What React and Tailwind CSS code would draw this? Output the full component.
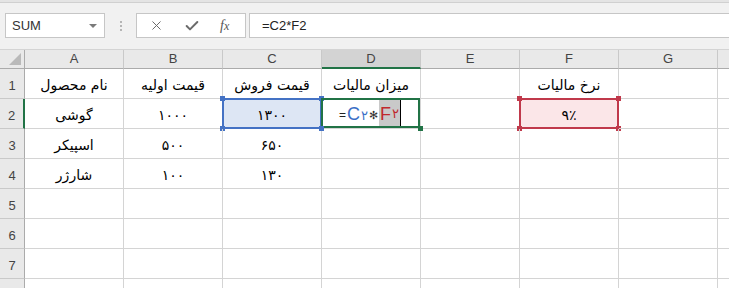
import { X, Check } from 'lucide-react';

const cols = ['A', 'B', 'C', 'D', 'E', 'F', 'G'];

const rows = [
  ['نام محصول', 'قیمت اولیه', 'قیمت فروش', 'میزان مالیات', '', 'نرخ مالیات', ''],
  ['گوشی', '۱۰۰۰', '۱۳۰۰', null, '', '۹٪', ''],
  ['اسپیکر', '۵۰۰', '۶۵۰', '', '', '', ''],
  ['شارژر', '۱۰۰', '۱۳۰', '', '', '', ''],
  ['', '', '', '', '', '', ''],
  ['', '', '', '', '', '', ''],
  ['', '', '', '', '', '', ''],
  ['', '', '', '', '', '', ''],
];

const latin = { fontFamily: '"Liberation Sans", Arial, sans-serif' };
const persian = { fontFamily: '"DejaVu Sans", "Liberation Sans", sans-serif' };

function Handle({ className }) {
  return <span className={`absolute w-[5px] h-[5px] ${className}`} />;
}

function FormulaCell() {
  return (
    <div className="relative h-full flex justify-end items-stretch pr-[19px] pt-px pb-px" dir="ltr" style={latin}>
      <div className="absolute inset-0 -left-px -top-px border-2 border-[#217346] pointer-events-none" />
      <Handle className="-left-[3px] -bottom-[3px] bg-[#4472c4] z-10" />
      <Handle className="-right-[3px] -bottom-[3px] bg-[#217346] z-10" />
      <div className="flex items-center leading-none">
        <span className="text-[12px] text-[#222] mt-[3px] mr-px">=</span>
        <span className="text-[#3a6fc6] text-[18px]">C<span style={persian} className="text-[13px] ml-px">۲</span></span>
        <span className="text-[#333] text-[11px] mx-px mt-[3px]">✻</span>
      </div>
      <div className="flex items-center bg-[#c9c9c9] px-px text-[#c0282d] text-[18px] leading-none">
        F<span style={persian} className="text-[13px] ml-px">۲</span>
      </div>
      <div className="w-px bg-black" />
    </div>
  );
}

export default function App() {
  return (
    <div className="w-[729px] h-[288px] overflow-hidden bg-white select-none" style={latin}>
      {/* formula bar */}
      <div className="h-[50px] bg-[#f1f1f1] border-b border-[#d4d4d4]">
        <div className="h-[3px] bg-[#e4e4e4] border-b border-[#d0d0d0]" />
        <div className="flex items-center pt-[10px] pl-[5px]">
          <div className="w-[100px] h-[25px] bg-white border border-[#c6c6c6] flex items-center justify-between pl-[6px] pr-[7px]">
            <span className="text-[13px] text-[#333]">SUM</span>
            <span className="w-0 h-0 border-l-[4px] border-r-[4px] border-t-[4px] border-l-transparent border-r-transparent border-t-[#7a7a7a]" />
          </div>
          <div className="w-[31px] flex flex-col items-center gap-[2px]">
            <span className="w-[2px] h-[2px] bg-[#b5b5b5]" />
            <span className="w-[2px] h-[2px] bg-[#b5b5b5]" />
            <span className="w-[2px] h-[2px] bg-[#b5b5b5]" />
          </div>
          <div className="w-[110px] h-[25px] bg-white border border-[#c6c6c6] flex items-center pl-[12px] gap-[20px] text-[#6b6b6b]">
            <X size={15} strokeWidth={1.6} />
            <Check size={16} strokeWidth={3} />
            <span className="italic text-[14px] text-[#555]" style={{ fontFamily: '"Liberation Serif", serif' }}>
              f<span className="text-[12px]">x</span>
            </span>
          </div>
          <div className="ml-[3px] flex-1 h-[25px] bg-white border border-r-0 border-[#c6c6c6] flex items-center pl-[12px]">
            <span className="text-[13px] text-[#222]">=C2*F2</span>
          </div>
        </div>
      </div>

      {/* sheet grid */}
      <div className="grid grid-cols-[25px_repeat(7,99px)_1fr] grid-rows-[19px_repeat(8,30px)]">
        <div className="bg-[#e9e9e9] border-r border-b border-[#ababab] relative">
          <svg className="absolute right-[3px] bottom-[3px]" width="12" height="12" viewBox="0 0 12 12">
            <polygon points="12,0 12,12 0,12" fill="#b9b9b9" />
          </svg>
        </div>
        {cols.map((c) => (
          <div
            key={c}
            className={`flex items-center justify-center text-[13px] text-[#444] border-r border-[#c9c9c9] ${
              c === 'D' ? 'bg-[#d3d3d3] border-b-2 border-b-[#217346]' : 'bg-[#e9e9e9] border-b border-b-[#ababab]'
            }`}
          >
            {c}
          </div>
        ))}
        <div className="bg-[#e9e9e9] border-b border-[#ababab]" />

        {rows.map((r, i) => (
          <div key={i} className="contents">
            <div
              className={`flex items-end justify-center pb-[3px] text-[13px] text-[#444] bg-[#e9e9e9] border-b border-[#c9c9c9] ${
                i === 1 ? 'border-r-2 border-r-[#217346]' : 'border-r border-r-[#ababab]'
              }`}
            >
              {i < 7 ? i + 1 : ''}
            </div>
            {r.map((v, j) => {
              const isC2 = i === 1 && j === 2;
              const isF2 = i === 1 && j === 5;
              const isD2 = i === 1 && j === 3;
              return (
                <div
                  key={j}
                  className={`relative border-r border-b border-[#d4d4d4] ${
                    isC2 ? 'bg-[#dde6f4]' : isF2 ? 'bg-[#fbe6e8]' : ''
                  }`}
                >
                  {isD2 ? (
                    <FormulaCell />
                  ) : (
                    <div className="h-full flex items-end justify-center pb-[2px] text-[14px] text-black" dir="rtl" style={persian}>
                      {v}
                    </div>
                  )}
                  {isC2 && (
                    <>
                      <div className="absolute -left-px -top-px -right-px -bottom-px border-2 border-[#4472c4] pointer-events-none" />
                      <Handle className="-left-[3px] -top-[3px] bg-[#4472c4]" />
                      <Handle className="-right-[3px] -top-[3px] bg-[#4472c4]" />
                      <Handle className="-left-[3px] -bottom-[3px] bg-[#4472c4]" />
                    </>
                  )}
                  {isF2 && (
                    <>
                      <div className="absolute -left-px -top-px -right-px -bottom-px border-2 border-[#c0394b] pointer-events-none" />
                      <Handle className="-left-[3px] -top-[3px] bg-[#c0394b]" />
                      <Handle className="-right-[3px] -top-[3px] bg-[#c0394b]" />
                      <Handle className="-left-[3px] -bottom-[3px] bg-[#c0394b]" />
                      <Handle className="-right-[3px] -bottom-[3px] bg-[#c0394b]" />
                    </>
                  )}
                </div>
              );
            })}
            <div className="border-b border-[#d4d4d4]" />
          </div>
        ))}
      </div>
    </div>
  );
}
